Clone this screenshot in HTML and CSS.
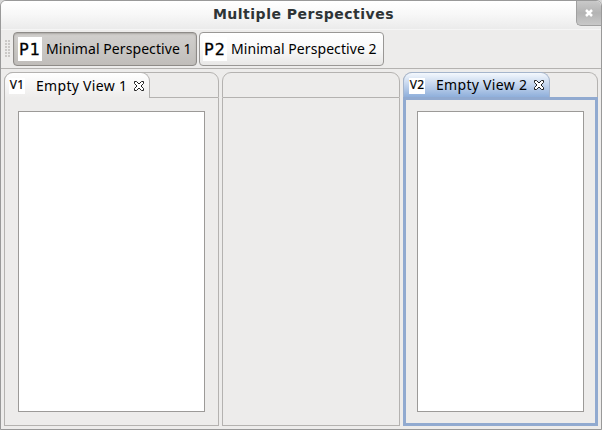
FILE: index.html
```
<!DOCTYPE html>
<html lang="en">
<head>
<meta charset="utf-8">
<title>Multiple Perspectives</title>
<link rel="stylesheet" href="styles.css">
</head>
<body>
<div class="window">
  <header class="titlebar">
    <h1 class="title">Multiple Perspectives</h1>
    <button class="window-close" aria-label="Close">
      <svg width="8" height="8" viewBox="0 0 8 8"><path d="M1 1L7 7M7 1L1 7" stroke="#fff" stroke-width="2.5"/></svg>
    </button>
  </header>
  <nav class="toolbar">
    <span class="grip"></span>
    <button class="perspective active"><span class="picon">P1</span><span class="plabel">Minimal Perspective 1</span></button>
    <button class="perspective"><span class="picon">P2</span><span class="plabel">Minimal Perspective 2</span></button>
  </nav>
  <main class="workbench">
    <section class="stack">
      <div class="tabs">
        <div class="tab"><span class="vicon">V1</span><span class="vlabel">Empty View 1</span>
          <svg class="tab-close" width="12" height="12" viewBox="0 0 12 12"><path d="M1.5 1.5H3.5L6 4L8.5 1.5H10.5V3.5L8 6L10.5 8.5V10.5H8.5L6 8L3.5 10.5H1.5V8.5L4 6L1.5 3.5Z"/></svg>
        </div>
      </div>
      <div class="body"><div class="canvas"></div></div>
    </section>
    <section class="stack">
      <div class="tabs"></div>
      <div class="body"></div>
    </section>
    <section class="stack focused">
      <div class="tabs">
        <div class="tab"><span class="vicon">V2</span><span class="vlabel">Empty View 2</span>
          <svg class="tab-close" width="12" height="12" viewBox="0 0 12 12"><path d="M1.5 1.5H3.5L6 4L8.5 1.5H10.5V3.5L8 6L10.5 8.5V10.5H8.5L6 8L3.5 10.5H1.5V8.5L4 6L1.5 3.5Z"/></svg>
        </div>
      </div>
      <div class="body"><div class="canvas"></div></div>
    </section>
  </main>
</div>
</body>
</html>
```
FILE: styles.css
```
* { box-sizing: border-box; }
body { margin: 0; background: #d6d6d6; }
button { padding: 0; font: inherit; color: inherit; }
.window {
  width: 602px; height: 430px;
  display: flex; flex-direction: column;
  border: 1px solid #999; border-radius: 6px 6px 0 0;
  background: #edeceb; overflow: hidden;
  font-family: "Noto Sans", "Open Sans", sans-serif;
  color: #000;
}
.titlebar {
  height: 29px; flex: none;
  display: grid; grid-template-columns: 25px 1fr 25px;
  background: linear-gradient(#fff, #f8f8f8 45%, #ebebeb);
  border-bottom: 1px solid #f5f5f5;
}
.title {
  grid-column: 2; margin: 0; padding-left: 5px;
  font: bold 14px/26px "DejaVu Sans", sans-serif; letter-spacing: 0.5px;
  text-align: center; color: #2e3436; white-space: nowrap;
}
.window-close {
  height: 25px; display: flex; align-items: center; justify-content: center;
  border: solid #a0a0a0; border-width: 0 0 1px 1px; border-radius: 0 0 0 5px;
  background: linear-gradient(#c9c9c9, #b4b4b4 50%, #c8c8c8);
}
.toolbar {
  height: 39px; flex: none; display: flex; align-items: flex-start;
  padding: 2px 0 0 4px; border-bottom: 1px solid #b4b2b0;
}
.grip {
  width: 6px; height: 18px; margin: 8px 2px 0 0;
  background: radial-gradient(circle at 1px 1px, #c9c7c5 0.7px, transparent 1px) 0 0 / 3px 3px;
}
.perspective {
  width: 185px; height: 34px; padding: 0 0 0 3px;
  display: flex; align-items: center;
  border: 1px solid #999795; border-radius: 4px;
  background: linear-gradient(#fff, #f9f9f9 50%, #e8e7e6);
}
.perspective.active {
  width: 184px; margin-right: 2px; padding-left: 4px;
  border-color: #8e8b88;
  background: linear-gradient(#d2d0ce, #c9c7c4 50%, #c0bdba);
  box-shadow: inset 0 1px 2px #aaa7a3;
}
.picon {
  width: 24px; height: 24px; flex: none; background: #fff;
  font: 16px/25px "DejaVu Sans", sans-serif; text-align: center; letter-spacing: 1.2px;
  -webkit-text-stroke: 0.3px #000;
}
.plabel { margin-left: 4px; font-size: 14px; line-height: 20px; letter-spacing: 0.07px; white-space: nowrap; }
.workbench {
  flex: 1; min-height: 0; display: grid;
  grid-template-columns: 215px 178px 195px; gap: 3px;
  padding: 3px 3px 3px;
}
.stack { display: flex; flex-direction: column; min-width: 0; }
.tabs {
  height: 26px; flex: none; border: 1px solid #b4b2b0;
  border-radius: 9px 9px 0 0;
}
.tab {
  width: 146px; height: 26px; margin: -1px 0 0 -1px; padding-left: 4px;
  display: flex; align-items: center;
  border: 1px solid #b4b2b0; border-bottom: 0; border-radius: 9px 9px 0 0;
  background: linear-gradient(#fff, #edeceb);
}
.vicon {
  width: 16px; height: 16px; flex: none; background: #fff;
  font-size: 12px; line-height: 14px; text-align: center; letter-spacing: 0.3px;
  -webkit-text-stroke: 0.2px #000;
}
.vlabel { width: 97px; margin-left: 11px; font-size: 14px; line-height: 20px; letter-spacing: 0.3px; white-space: nowrap; }
.tab-close { flex: none; fill: #fff; stroke: #222; }
.body {
  flex: 1; padding: 13px; border: 1px solid #b4b2b0; border-top: 0;
}
.canvas { height: 301px; background: #fff; border: 1px solid #9c9a98; }
.focused .tabs { height: 25px; border-bottom: 0; }
.focused .tab {
  width: 147px; height: 25px; padding-left: 5px; border-color: #a5b5cc;
  background: linear-gradient(#f4f8fd, #c2d4ed 50%, #8fafdb);
}
.focused .vicon { margin-top: 1px; }
.focused .body { border: 3px solid #91aad0; padding: 11px; }
```
